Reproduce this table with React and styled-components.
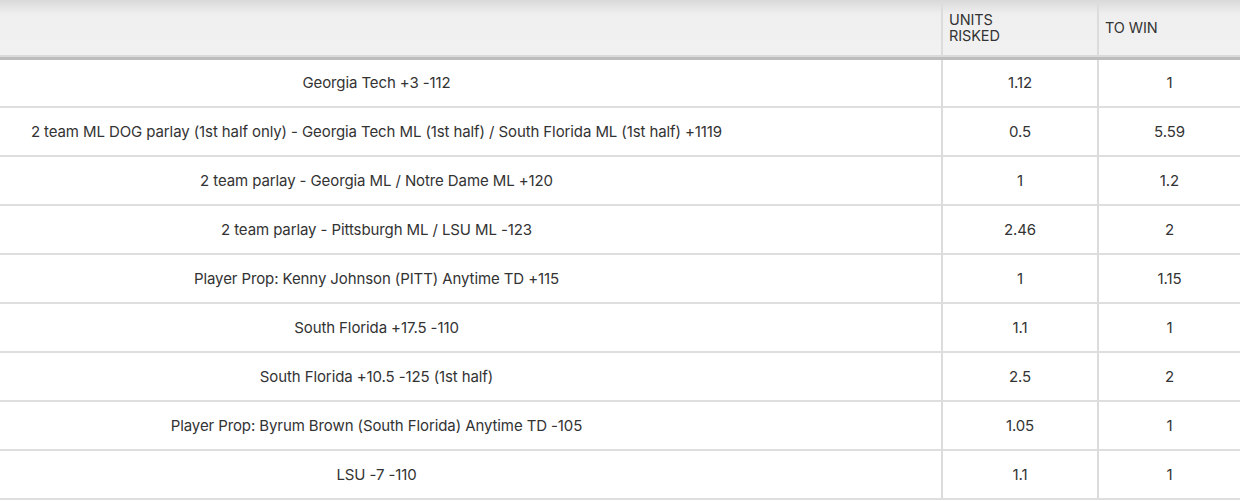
import React from 'react';
import styled, { createGlobalStyle } from 'styled-components';

const GlobalStyle = createGlobalStyle`
  body {
    margin: 0;
    background: #ffffff;
    font-family: Inter, "Liberation Sans", Arial, sans-serif;
    color: #333333;
  }
`;

const Table = styled.table`
  width: 1240px;
  border-collapse: collapse;
  table-layout: fixed;
`;

const Col = styled.col`
  width: ${p => p.$width};
`;

const HeadRow = styled.tr`
  height: 58px;
  background: linear-gradient(to bottom, #d9d9d9 0px, #efefef 14px, #f1f1f1 100%);
  border-bottom: 3px solid #bdbdbd;
`;

const HeadCell = styled.th`
  padding: 0 6px;
  text-align: left;
  vertical-align: middle;
  font-size: 14.5px;
  font-weight: 400;
  line-height: 16px;
  color: #333333;
  letter-spacing: -0.1px;
  border-left: ${p => (p.$first ? 'none' : '2px solid #dcdcdc')};
`;

const Row = styled.tr`
  height: 49px;
  border-bottom: 2px solid #dedede;
`;

const Cell = styled.td`
  padding: ${p => (p.$first ? '0 196px 0 8px' : '0 8px')};
  text-align: center;
  vertical-align: middle;
  font-size: 15px;
  color: #333333;
  letter-spacing: -0.1px;
  border-left: ${p => (p.$first ? 'none' : '2px solid #dcdcdc')};
`;

const bets = [
  ['Georgia Tech +3 -112', '1.12', '1'],
  ['2 team ML DOG parlay (1st half only) - Georgia Tech ML (1st half) / South Florida ML (1st half) +1119', '0.5', '5.59'],
  ['2 team parlay - Georgia ML / Notre Dame ML +120', '1', '1.2'],
  ['2 team parlay - Pittsburgh ML  / LSU ML -123', '2.46', '2'],
  ['Player Prop: Kenny Johnson (PITT) Anytime TD +115', '1', '1.15'],
  ['South Florida +17.5 -110', '1.1', '1'],
  ['South Florida +10.5 -125 (1st half)', '2.5', '2'],
  ['Player Prop: Byrum Brown (South Florida) Anytime TD -105', '1.05', '1'],
  ['LSU -7 -110', '1.1', '1'],
];

export default function App() {
  return (
    <>
      <GlobalStyle />
      <Table>
        <colgroup>
          <Col $width="942px" />
          <Col $width="156px" />
          <Col $width="142px" />
        </colgroup>
        <thead>
          <HeadRow>
            <HeadCell $first />
            <HeadCell>UNITS<br />RISKED</HeadCell>
            <HeadCell>TO WIN</HeadCell>
          </HeadRow>
        </thead>
        <tbody>
          {bets.map(([bet, risked, win]) => (
            <Row key={bet}>
              <Cell $first>{bet}</Cell>
              <Cell>{risked}</Cell>
              <Cell>{win}</Cell>
            </Row>
          ))}
        </tbody>
      </Table>
    </>
  );
}
